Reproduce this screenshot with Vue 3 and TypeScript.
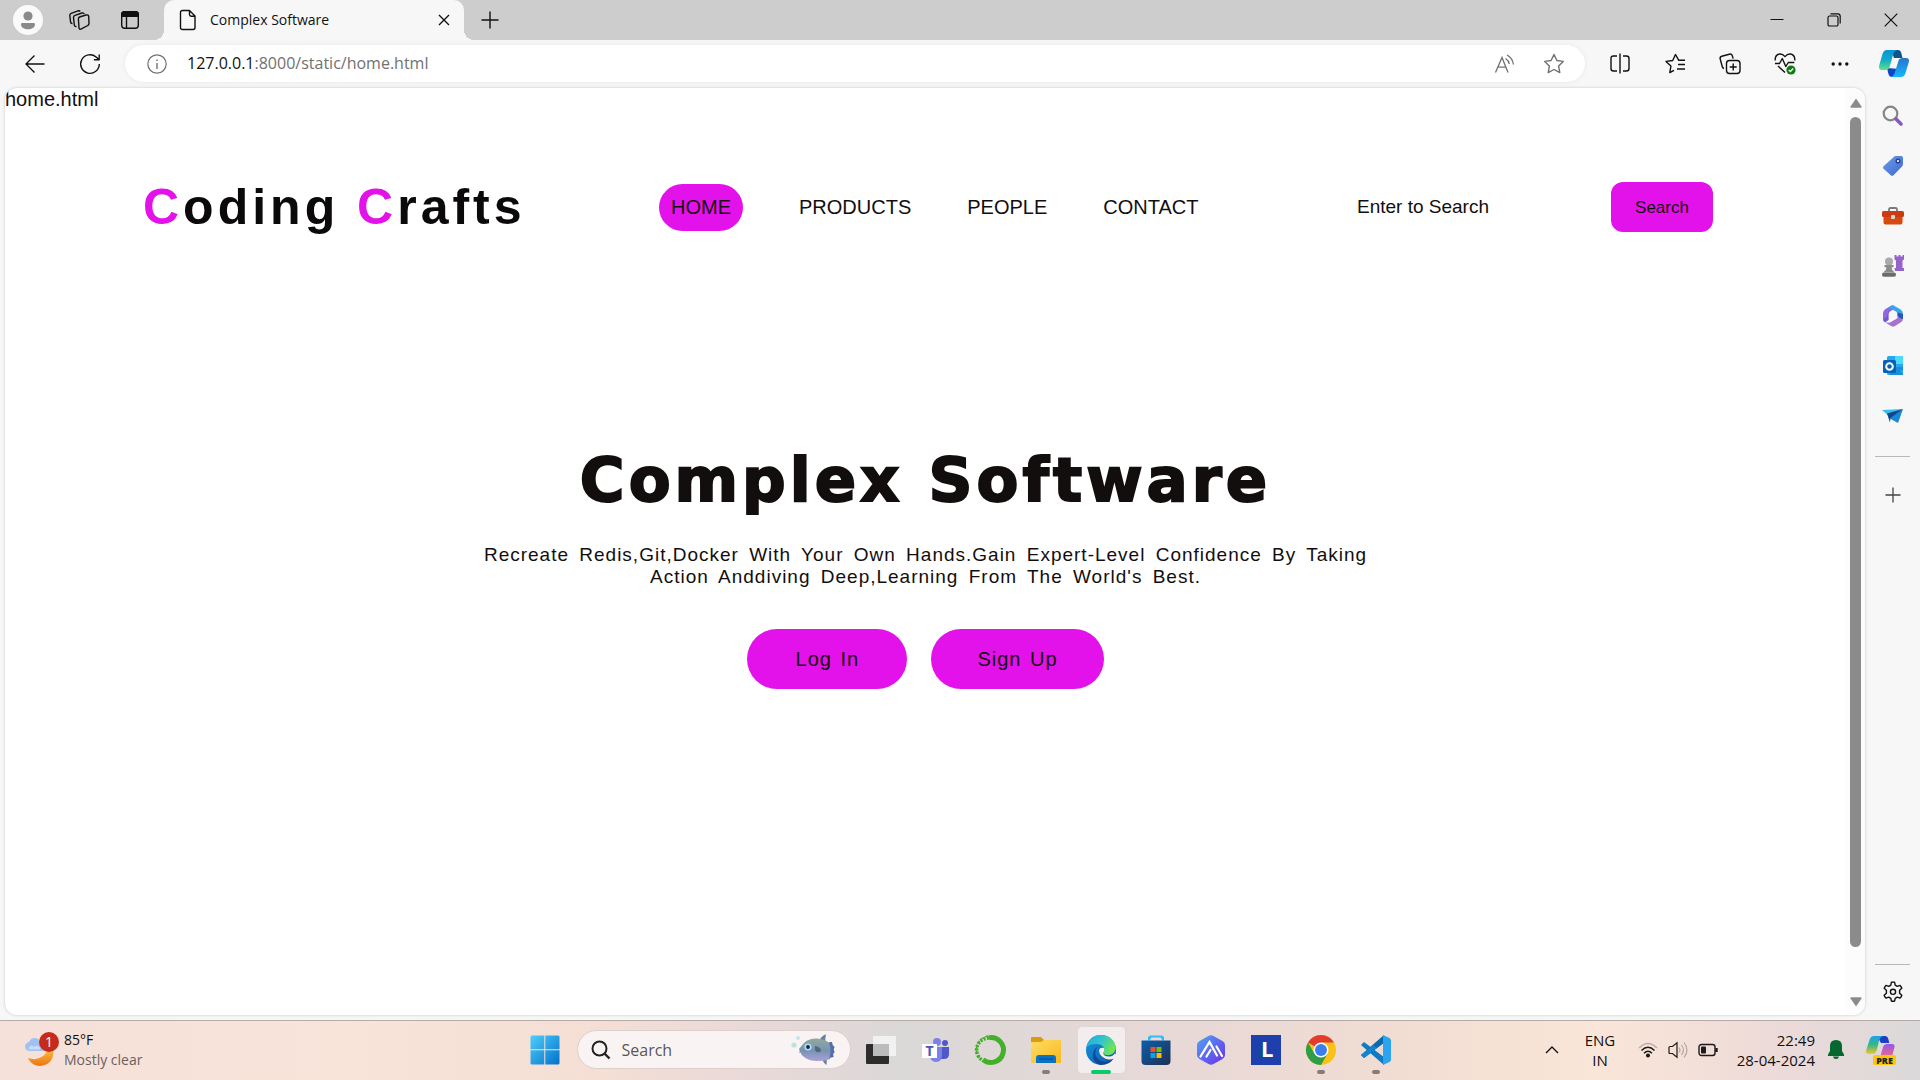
<script setup lang="ts">
import { ref } from 'vue'

const navLinks: string[] = ['HOME', 'PRODUCTS', 'PEOPLE', 'CONTACT']
const active = ref<string>('HOME')
const query = ref<string>('')
</script>

<template>
  <div class="desktop">
    <header class="titlebar">
      <button class="tool profile" aria-label="Profile">
        <svg width="30" height="30" viewBox="0 0 30 30"><circle cx="15" cy="15" r="15" fill="#fafafa" /><circle cx="15" cy="11" r="4.6" fill="#8a8a8a" /><path d="M8 19.4q0-1.4 1.4-1.4h11.200q1.400 0 1.400 1.400c0 3-3.300 4.800-7 4.800s-7-1.800-7-4.800z" fill="#8a8a8a" /></svg>
      </button>
      <button class="tool spaces" aria-label="Workspaces">
        <svg width="22" height="22" viewBox="0 0 22 22" class="line"><path d="M11.500 8l6.500-2q2.500-.7 2.700 1.600l.3 6.700q0 1.600-1.200 2.200l-6.400 3.400q-2.200 1-2.400-1.200l-.6-8.400q0-1.800 1.100-2.300zM8.500 17.500q-2 .3-2.200-1.500l-.8-7.500q-.1-1.700 1.500-2.200l7-2.300q1.800-.4 2.300 1M4.500 14.500q-1.700.2-1.900-1.300L1.800 6.500Q1.700 4.900 3.200 4.300l6.800-2.500q1.500-.4 2.200.7" /></svg>
      </button>
      <button class="tool tabs-btn" aria-label="Tab actions">
        <svg width="20" height="20" viewBox="0 0 20 20" class="line"><rect x="1.700" y="1.700" width="16.600" height="16.600" rx="3" /><path d="M1.700 4.500q0-2.800 2.800-2.800h11q2.800 0 2.800 2.800v1.700H1.700z" fill="#111" /><path d="M6.500 6v12" /></svg>
      </button>
      <div class="tab">
        <svg width="18" height="22" viewBox="0 0 18 22" class="line"><path d="M3.500 1.500h7l5.500 5.500v11.500q0 2-2 2h-10.500q-2 0-2-2v-15q0-2 2-2zM10.500 1.500v4q0 1.700 1.700 1.700H16" /></svg>
        <span class="tab-title">Complex Software</span>
        <button class="tab-close" aria-label="Close tab">
          <svg width="12" height="12" viewBox="0 0 12 12" class="line"><path d="M1 1l10 10M11 1L1 11" /></svg>
        </button>
      </div>
      <button class="tool new-tab" aria-label="New tab">
        <svg width="18" height="18" viewBox="0 0 18 18" class="line"><path d="M9 .5v17M.5 9h17" /></svg>
      </button>
      <div class="window-btns">
        <button aria-label="Minimize"><svg width="14" height="14" viewBox="0 0 14 14"><path d="M.5 6.500h13" stroke="#111" /></svg></button>
        <button aria-label="Restore"><svg width="14" height="14" viewBox="0 0 14 14" fill="none" stroke="#111" stroke-width="1.200"><rect x="1" y="3" width="10" height="10" rx="1.600" /><path d="M3.500.8h7.200q2.500 0 2.500 2.500v7.200" /></svg></button>
        <button aria-label="Close"><svg width="14" height="14" viewBox="0 0 14 14"><path d="M.7.7l12.600 12.600M13.300.7L.7 13.300" stroke="#111" stroke-width="1.200" /></svg></button>
      </div>
    </header>

    <div class="toolbar">
      <button class="cell" aria-label="Back"><svg width="20" height="20" viewBox="0 0 20 20" class="line"><path d="M19.500 10H1M9.500 1.500L1 10l8.500 8.500" /></svg></button>
      <button class="cell" aria-label="Refresh"><svg width="22" height="22" viewBox="0 0 22 22" class="line"><path d="M20.300 11a9.300 9.300 0 1 1-3.200-7l3 2.600M20.200 1.500v5.200h-5.300" /></svg></button>
      <div class="address">
        <svg width="20" height="20" viewBox="0 0 20 20" fill="none" stroke="#717171" stroke-width="1.200"><circle cx="10" cy="10" r="9.200" /><path d="M10 9v6M10 5.400v1.700" stroke-width="1.400" /></svg>
        <span class="url"><b>127.0.0.1</b>:8000/static/home.html</span>
        <button class="in-bar" aria-label="Read aloud"><svg width="21" height="20" viewBox="0 0 21 20" fill="none" stroke="#717171" stroke-width="1.300"><path d="M1.500 18.500L8 3.500l6 15M3.700 13.200h8.200M11.500 4.500q3.200 2 3.800 5.500M13 1q5.600 3 6.400 9.500" /></svg></button>
        <button class="in-bar" aria-label="Favourite"><svg width="22" height="22" viewBox="0 0 22 22" fill="none" stroke="#717171" stroke-width="1.400" stroke-linejoin="round"><path d="M11 1.500l2.900 6 6.400.9-4.700 4.600 1.200 6.600-5.800-3.100-5.800 3.100 1.200-6.600L1.700 8.400l6.400-.9z" /></svg></button>
      </div>
      <button class="cell" aria-label="Split screen"><svg width="22" height="22" viewBox="0 0 22 22" class="line"><path d="M8 3H4.500Q2 3 2 5.500v10Q2 18 4.500 18H8M14 3h3.500Q20 3 20 5.500v10q0 2.500-2.500 2.500H14M11 .5v20" /></svg></button>
      <button class="cell" aria-label="Favourites"><svg width="22" height="22" viewBox="0 0 22 22" class="line"><path d="M21 7.300h-6.200L11.500 1.500l-2.800 6-6.700.9 4.900 4.700-1.100 6.400 4.200-2.100M14 11.500h7M13 16h8" /></svg></button>
      <button class="cell" aria-label="Collections"><svg width="22" height="22" viewBox="0 0 22 22" class="line"><rect x="7.500" y="7.500" width="13.500" height="13" rx="3" /><path d="M14.200 10.500v7M10.700 14h7M5 15.500q-1.300-.3-1.700-1.800L1.200 6Q.6 3.800 2.800 3.200l7.500-2Q12.500.6 13.200 2.600l1 3" /></svg></button>
      <button class="cell" aria-label="Browser essentials"><svg width="22" height="23" viewBox="0 0 22 23" class="line"><path d="M1.200 8.500Q.8 3 5.500 2q3-.4 5.500 2.600Q13.500 1.600 16.500 2q4.700 1 4.300 6.500M1 11.500h4.500l2.800-5 3.500 8 2.500-4h6M4 14l7 6.500" /><circle cx="17" cy="18" r="4.600" fill="#107c10" stroke="none" /><path d="M14.800 18l1.600 1.600 2.800-3" stroke="#fff" /></svg></button>
      <button class="cell" aria-label="More"><svg width="18" height="6" viewBox="0 0 18 6" fill="#111"><circle cx="2.200" cy="3" r="1.700" /><circle cx="9" cy="3" r="1.700" /><circle cx="15.800" cy="3" r="1.700" /></svg></button>
      <button class="cell copilot-btn" aria-label="Copilot">
        <svg width="30" height="27" viewBox="0 0 30 27">
          <defs><linearGradient id="cpA" x1="0" y1="0" x2="0" y2="1"><stop offset="0" stop-color="#0893dc" /><stop offset=".5" stop-color="#12acc4" /><stop offset="1" stop-color="#63e08a" /></linearGradient><linearGradient id="cpB" x1="0" y1="0" x2="0" y2="1"><stop offset="0" stop-color="#2773cf" /><stop offset="1" stop-color="#16b8fb" /></linearGradient></defs>
          <path d="M12 0h7q2.500 0 3.300 3l1.200 5H15z" fill="#13558a" /><path d="M8 18l1.300 5.500Q10.300 27 13 27h5l3-8z" fill="#1443c8" />
          <path d="M8 0h10q-3 1-4 5l-3.400 12q-1 3-4 3H3q-4 0-2.700-5L3.500 4Q4.700 0 8 0z" fill="url(#cpA)" />
          <path d="M22 27H12q3-1 4-5l3.400-11q1-3 4-3H27q4 0 2.700 4.500L26.500 23Q25.300 27 22 27z" fill="url(#cpB)" />
        </svg>
      </button>
    </div>

    <div class="browser">
      <div class="viewport">
        <main class="page">
          <p class="filename">home.html</p>
          <div class="site-head">
            <div class="logo"><span>C</span>oding <span>C</span>rafts</div>
            <nav>
              <a v-for="link in navLinks" :key="link" href="#" :class="{ active: link === active }" @click.prevent="active = link">{{ link }}</a>
            </nav>
            <form class="site-search" @submit.prevent>
              <input v-model="query" type="text" aria-label="Enter to Search" placeholder="Enter to Search" />
              <button>Search</button>
            </form>
          </div>
          <section class="hero">
            <h1>Complex Software</h1>
            <p>Recreate Redis,Git,Docker With Your Own Hands.Gain Expert-Level Confidence By Taking Action Anddiving Deep,Learning From The World's Best.</p>
            <div class="cta"><a href="#">Log In</a><a href="#">Sign Up</a></div>
          </section>
        </main>
        <div class="scrollbar">
          <svg width="12" height="10" viewBox="0 0 12 10"><path d="M6 .5l5.500 8q.3 1.200-.8 1.200H1.300q-1.100 0-.8-1.200z" fill="#8b8b8b" /></svg>
          <div class="track"><div class="thumb"></div></div>
          <svg width="12" height="10" viewBox="0 0 12 10"><path d="M6 9.500l5.500-8Q11.800.3 10.700.3H1.300Q.2.300.5 1.500z" fill="#8b8b8b" /></svg>
        </div>
      </div>
      <aside class="sidebar">
        <button aria-label="Search"><svg width="22" height="22" viewBox="0 0 22 22"><circle cx="8.500" cy="8.500" r="6.800" fill="none" stroke="#858585" stroke-width="2.200" /><path d="M14 14l5 5" stroke="#8b57c4" stroke-width="3.600" stroke-linecap="round" /></svg></button>
        <button aria-label="Shopping"><svg width="22" height="22" viewBox="0 0 22 22"><defs><linearGradient id="tag" x1="0" y1="0" x2="1" y2="1"><stop offset="0" stop-color="#6a9be8" /><stop offset="1" stop-color="#4169d0" /></linearGradient></defs><path d="M11.500 2.200Q12.300 1 14 1h5q2 0 2 2v6q0 1.500-1 2.400l-8.500 8.800q-1.300 1.200-2.700 0L1.500 13.700q-1-1.200 0-2.500z" fill="url(#tag)" /><circle cx="16" cy="6" r="1.800" fill="#fff" stroke="#2d3f94" stroke-width="1.500" /></svg></button>
        <button aria-label="Tools"><svg width="22" height="20" viewBox="0 0 22 20"><path d="M7 6V3.500Q7 2 8.500 2h5Q15 2 15 3.500V6" fill="none" stroke="#7b7b7b" stroke-width="1.800" /><path d="M1.500 9h19v7.500q0 2-2 2h-15q-2 0-2-2z" fill="#d9480f" /><rect x="0" y="5" width="22" height="6" rx="1.500" fill="#cc3b10" /><rect x="9" y="9" width="4" height="4" rx="1" fill="#d4d4d4" /></svg></button>
        <button aria-label="Games"><svg width="22" height="22" viewBox="0 0 22 22"><path d="M12.500 0h2v1.500h2V0h2v1.500h2V0h1.500v4.500l-1.500 1v7.500h1.500v3h-9l-.5-3h1.500V5.500l-1.500-1z" fill="#9563cb" /><circle cx="7" cy="6.500" r="4" fill="#aaa" /><path d="M2.500 10h9v2.200H9.500q0 3 3 5H1.500q3-2 3-5h-2z" fill="#8b8b8b" /><rect x="0" y="17.500" width="14" height="4.300" rx="2" fill="#6c6c6c" /></svg></button>
        <button aria-label="Microsoft 365"><svg width="22" height="22" viewBox="0 0 22 22"><path d="M9 .8L3.500 4Q1 5.500 1 8.500v5.200q0 2.500 2 3.600L6.500 15V9.500Q6.500 7.500 8 6.500l5-3-.5-2.500Q11-.2 9 .8z" fill="#8f69df" /><path d="M12.500 1l5.800 3.300Q21 6 21 8.800V14l-5.500-2V9q0-1.500-1.500-2.500L8 3.500q-.5-2 1-2.700 2-.9 3.500.2z" fill="#37a6ec" /><path d="M21 9v4.500q0 2.700-2.500 4L13 21q-2 1-4 0l-6-3.700q4 1 6-.3l5.500-3.500Q17 12 17 9z" fill="#a870d1" /><path d="M8 3.500l-1.500 6V15L3 17.300Q1 16 1 13.700q4-.7 4.500-4.200z" fill="#5a4fd0" opacity=".55" /><path d="M15.500 7.500L21 9v5q-3 0-5.500-3z" fill="#2558bb" /><circle cx="11" cy="11" r="4" fill="#f7f7f7" /></svg></button>
        <button aria-label="Outlook"><svg width="22" height="22" viewBox="0 0 22 22"><rect x="5" y="1" width="16" height="19" rx="1.500" fill="#28a8ea" /><path d="M13 1h8v8h-8z" fill="#50d9ff" /><path d="M14 12h7v2l-3 2 3 3v1H8v-3z" fill="#1490df" /><rect x="1" y="5" width="13" height="13" rx="1.500" fill="#0364b8" /><circle cx="7.500" cy="11.500" r="3.300" fill="none" stroke="#fff" stroke-width="2" /></svg></button>
        <button aria-label="Drop"><svg width="22" height="18" viewBox="0 0 22 18"><path d="M0 3L21 2l-13 8z" fill="#37bdf0" /><path d="M21 2l-5 14-9-5z" fill="#1688d4" /><path d="M5 6.500L21 2 8.500 11 8 15.500z" fill="#10478a" /></svg></button>
        <hr />
        <button class="add" aria-label="Add"><svg width="16" height="16" viewBox="0 0 16 16"><path d="M8 .5v15M.5 8h15" stroke="#444" stroke-width="1.300" /></svg></button>
        <span class="spacer"></span>
        <hr />
        <button class="gear" aria-label="Settings"><svg width="22" height="22" viewBox="0 0 22 22" class="line"><path d="M8.800 4.200l.6-2.900q1.600-.4 3.200 0l.6 2.900 2 1.200 2.900-1q1.200 1.200 1.700 2.900l-2.200 2v2.900l2.200 2q-.5 1.700-1.700 2.900l-2.900-1-2 1.200-.6 2.700q-1.600.4-3.200 0l-.6-2.700-2-1.200-2.900 1q-1.200-1.200-1.700-2.900l2.200-2V9.300l-2.200-2q.5-1.700 1.700-2.900l2.900 1z" /><circle cx="11" cy="10.800" r="2.600" /></svg></button>
      </aside>
    </div>

    <footer class="taskbar">
      <div class="side weather">
        <svg width="36" height="36" viewBox="0 0 36 36"><defs><linearGradient id="moon" x1="0" y1="0" x2="0" y2="1"><stop offset="0" stop-color="#fbc040" /><stop offset="1" stop-color="#ee7413" /></linearGradient></defs><path d="M28 17q2 9-5 14.500-6 4-13 1.500-5-2-7-7 9 3 15-2 4-3 4-7z" fill="url(#moon)" /><path d="M4 19q-4-1-4-4.500T4 10q2-4.500 6-4t6 4q5 0 5 4.500T17 19z" fill="#9fc2f2" /><path d="M4 15q3-3 5 0 4-3 6 1v1.500H4z" fill="#c6ddfa" /><circle cx="24" cy="10" r="10" fill="#c42b1c" /><text x="24" y="15" text-anchor="middle" font-size="14" fill="#fff">1</text></svg>
        <div><div>85°F</div><div class="muted">Mostly clear</div></div>
      </div>

      <div class="apps">
        <button class="app" aria-label="Start"><svg width="30" height="30" viewBox="0 0 30 30"><defs><linearGradient id="win" gradientUnits="userSpaceOnUse" x1="0" y1="0" x2="30" y2="30"><stop offset="0" stop-color="#4fd1fc" /><stop offset="1" stop-color="#006fcc" /></linearGradient></defs><path d="M2 .5h12.300v13.800H.5V2Q.5.5 2 .5zM15.300.5h12.700q1.500 0 1.500 1.500v12.300H15.300zM.5 15.300h13.800v14.200H2q-1.500 0-1.500-1.500zM15.300 15.300h14.200V28q0 1.500-1.500 1.500H15.300z" fill="url(#win)" /></svg></button>
        <label class="task-search">
          <svg width="20" height="20" viewBox="0 0 20 20" fill="none" stroke="#222" stroke-width="2"><circle cx="8.500" cy="8.500" r="7" /><path d="M13.500 13.500l5 5" stroke-width="2.400" /></svg>
          <input type="text" placeholder="Search" aria-label="Search" />
          <svg width="44" height="32" viewBox="0 0 44 32"><defs><linearGradient id="fish" x1="0" y1="0" x2="0" y2="1"><stop offset="0" stop-color="#91a99d" /><stop offset=".55" stop-color="#7893b3" /><stop offset="1" stop-color="#aaa2d6" /></linearGradient></defs><path d="M28 7q3-6 7-6.500-1.500 4 0 9zM31 24q1 5 4.500 7 .8-4-.5-9z" fill="#66809d" /><path d="M8 15q3-4 6-7 5-4 12-3.500 7 .5 12 4l3-.5.5 3 2 2-1 2.500 1 2.500-1.500 2 .5 3-3 .5-1.500 2Q33 27 26 27q-8 0-13-4-3-2.500-3.500-4.500L8 19l.8-2z" fill="url(#fish)" /><path d="M38 8.500l3-.5.5 3 2 2-1 2.500 1 2.500-1.500 2 .5 3-3 .5-1.500 2q3-9 0-17z" fill="#506fae" /><path d="M24 12q6 1 6 5-4 3-6-1z" fill="#4b6b76" /><circle cx="17" cy="13" r="3.600" fill="#a7e0f0" /><circle cx="17" cy="13" r="1.900" fill="#17204e" /><circle cx="3" cy="11" r="2.600" fill="#b9e4e4" /><circle cx="7" cy="4" r="2" fill="#c4e6ea" /></svg>
        </label>
        <button class="app" aria-label="Task view"><svg width="30" height="30" viewBox="0 0 30 30"><rect x="0" y="9" width="23" height="20" rx="1" fill="#2d2d2d" /><rect x="7" y="1" width="23" height="20" rx="1" fill="#f4f4f4" opacity=".9" /><path d="M7 9h16v12H7z" fill="#bcbcbc" /></svg></button>
        <button class="app" aria-label="Teams"><svg width="28" height="26" viewBox="0 0 28 26"><circle cx="15" cy="5" r="4" fill="#7b83eb" /><circle cx="23" cy="6" r="3" fill="#5059c9" /><path d="M18 10h9v7q0 5-5 5h-4z" fill="#5059c9" /><path d="M8 10h12v8q0 7-6 7t-6-7z" fill="#7b83eb" /><rect x="0" y="7" width="15" height="14" fill="#fff" /><text x="7.500" y="19" text-anchor="middle" font-size="14" font-weight="700" fill="#4b53bc">T</text></svg></button>
        <button class="app" aria-label="Anaconda"><svg width="30" height="30" viewBox="0 0 30 30" fill="none" stroke="#43b02a"><path d="M13 2.600A12.500 12.500 0 1 1 7 24.600" stroke-width="5" /><path d="M13 3A12 12 0 0 0 6 25" stroke-width="3.600" stroke-dasharray="2.200 1.300" /><path d="M12 1A14 14 0 0 0 4 24" stroke-width="1.400" stroke-dasharray="3 2" /></svg></button>
        <button class="app open" aria-label="Files"><svg width="30" height="28" viewBox="0 0 30 28"><defs><linearGradient id="fold" x1="0" y1="0" x2="1" y2="1"><stop offset="0" stop-color="#ffdc66" /><stop offset="1" stop-color="#f9b91c" /></linearGradient></defs><path d="M0 2q0-1 1-1h9l3 3h16q1 0 1 1v4H0z" fill="#dc9a0c" /><path d="M0 6h10l3-2h17v22q0 1-1 1H1q-1 0-1-1z" fill="url(#fold)" /><path d="M5 22q0-3 3-3h14q3 0 3 3v5H5z" fill="#0b73c4" /><path d="M8 23h14" stroke="#074b8d" /></svg></button>
        <button class="app current" aria-label="Edge"><svg width="30" height="30" viewBox="0 0 30 30"><defs><linearGradient id="edA" x1="0" y1="0" x2="1" y2=".5"><stop offset="0" stop-color="#2aa5dc" /><stop offset=".5" stop-color="#31c3cf" /><stop offset="1" stop-color="#6ee650" /></linearGradient><linearGradient id="edB" x1="0" y1="0" x2="1" y2="1"><stop offset="0" stop-color="#1494df" /><stop offset="1" stop-color="#0b5ba8" /></linearGradient></defs><circle cx="15" cy="15" r="15" fill="url(#edB)" /><path d="M.5 12Q3 0 15 0q9 0 13 7 3 6 1 9-2 4-7 4-4 0-5-2 2-2 1-5-2-4-8-4-6 0-9.500 3z" fill="url(#edA)" /><path d="M11 12q-4 7 1 12 5 5 13 1l3-2q-4 7-13 7Q6 28 7 19q1-5 4-7z" fill="#123f8c" opacity=".8" /><path d="M13 15q1-3 5-2 1 3-1 5 1 4 7 3.500 3-.5 5-3l2 4-3 1q-4 2-9 0-6-3-6-8.500z" fill="#f3eeed" /></svg></button>
        <button class="app" aria-label="Store"><svg width="30" height="30" viewBox="0 0 30 30"><defs><linearGradient id="store" x1="0" y1="0" x2="1" y2="1"><stop offset="0" stop-color="#0b5fae" /><stop offset="1" stop-color="#203052" /></linearGradient></defs><path d="M8 8V3q0-1.500 1.500-1.500h11Q22 1.500 22 3v5" fill="none" stroke="#35bdf0" stroke-width="2" /><path d="M.5 5.500h29V26q0 4-4 4h-21q-4 0-4-4z" fill="url(#store)" /><path d="M8 5.500V3h2M22 5.500V3h-2" fill="none" stroke="#35bdf0" stroke-width="2" /><path d="M9.500 12h5v5h-5z" fill="#f25022" /><path d="M15.500 12h5v5h-5z" fill="#7fba00" /><path d="M9.500 18h5v5h-5z" fill="#00a4ef" /><path d="M15.500 18h5v5h-5z" fill="#ffb900" /></svg></button>
        <button class="app" aria-label="Studio"><svg width="28" height="30" viewBox="0 0 28 30"><defs><linearGradient id="hex" x1="0" y1="0" x2="1" y2="1"><stop offset="0" stop-color="#50a4f4" /><stop offset="1" stop-color="#6b2fe8" /></linearGradient></defs><path d="M11.500 1q2.500-1.500 5 0l9 5Q28 7.300 28 10v10q0 2.700-2.500 4l-9 5q-2.500 1.500-5 0l-9-5Q0 22.700 0 20V10q0-2.700 2.500-4z" fill="url(#hex)" /><path d="M3.500 21.500L12.500 7 20 20.500M9.500 21.500l4-6.500M19.500 11.500l5.500 9.500" fill="none" stroke="#fff" stroke-width="2.200" stroke-linecap="round" /></svg></button>
        <button class="app" aria-label="L"><svg width="30" height="30" viewBox="0 0 30 30"><path d="M0 0h30v30H0z" fill="#1e3fae" /><path d="M8 23l4-17v17z" fill="#0f4f70" /><text x="10" y="22" font-size="22" font-weight="700" fill="#fff">L</text></svg></button>
        <button class="app open" aria-label="Chrome"><svg width="30" height="30" viewBox="0 0 30 30"><circle cx="15" cy="15" r="15" fill="#fbc116" /><path d="M15 15L2 7.500A15 15 0 0 1 28 7.500H15z" fill="#e33b2e" /><path d="M2 7.500A15 15 0 0 0 15 30l6.500-11.200L15 15 8.500 18.800z" fill="#2c9e48" /><circle cx="15" cy="15" r="7.500" fill="#fff" /><circle cx="15" cy="15" r="6" fill="#3c7df0" /></svg></button>
        <button class="app open" aria-label="Code"><svg width="30" height="30" viewBox="0 0 30 30"><path d="M0 10l3-3 20 15v8z" fill="#0f7bc4" /><path d="M0 20l3 3L23 8V0z" fill="#0a68ac" /><path d="M0 20l3 3L16 13l-4-3z" fill="#1283cc" /><path d="M22 0l6.500 3Q30 4 30 5.500v19q0 1.500-1.500 2.500L22 30z" fill="#2aa4ee" /><path d="M22 9l-8 6 8 6z" fill="#e8dad6" /></svg></button>
      </div>

      <div class="side tray">
        <svg width="14" height="8" viewBox="0 0 14 8" class="line"><path d="M1 7l6-6 6 6" /></svg>
        <div class="lang"><div>ENG</div><div>IN</div></div>
        <div class="status">
          <svg width="20" height="16" viewBox="0 0 20 16" fill="none" stroke="#1b1b1b" stroke-width="1.500"><path d="M1 6Q10-3 19 6" stroke="#b9aeab" /><path d="M3.500 8.500Q10 2 16.500 8.500M6 11.300q4-4.200 8 0" /><circle cx="10" cy="13.500" r="1.300" fill="#1b1b1b" /></svg>
          <svg width="20" height="18" viewBox="0 0 20 18" fill="none" stroke="#1b1b1b" stroke-width="1.200"><path d="M1 6.500q0-1 1-1h2.500L9 1.800v14.400l-4.500-3.700H2q-1 0-1-1z" /><path d="M11 6.500q2 2.500 0 5M13.500 4q4 5 0 10M16 1.500q6 7.500 0 15" stroke="#b3a8a5" /></svg>
          <svg width="20" height="14" viewBox="0 0 20 14" fill="none" stroke="#1b1b1b" stroke-width="1.400"><rect x="1" y="1.500" width="16" height="11" rx="2.500" /><path d="M18.500 5v4" stroke-width="2.400" /><rect x="3" y="3.500" width="5" height="7" rx="1" fill="#1b1b1b" stroke="none" /></svg>
        </div>
        <div class="clock"><div>22:49</div><div>28-04-2024</div></div>
        <svg width="16" height="19" viewBox="0 0 16 19"><path d="M8 0q6 0 6 6v5l2 3.500V16H0v-1.500L2 11V6q0-6 6-6zM5 16.500h6Q10.500 19 8 19t-3-2.500z" fill="#04682f" /></svg>
        <svg class="copilot" width="30" height="30" viewBox="0 0 30 30"><defs><linearGradient id="cpC" x1="0" y1="0" x2="0" y2="1"><stop offset="0" stop-color="#1ba2e8" /><stop offset=".5" stop-color="#35b983" /><stop offset="1" stop-color="#f6c528" /></linearGradient><linearGradient id="cpD" x1="0" y1="0" x2="0" y2="1"><stop offset="0" stop-color="#9a55ea" /><stop offset="1" stop-color="#f76f74" /></linearGradient></defs><path d="M11 1h8q2.500 0 3.300 3l1 4H15z" fill="#1c3fc4" /><path d="M8 1h9q-3 1-4 5l-2.500 10q-1 3-4 3H3q-4 0-2.700-4L3.500 5Q4.700 1 8 1z" fill="url(#cpC)" /><path d="M22 24H11q3-1 4-5l2-7q1-3 4-3h5q3 0 2.500 3L26 22z" fill="url(#cpD)" /><rect x="7" y="20" width="23" height="10" rx="2" fill="#fcc60a" /><text x="18.500" y="28.500" text-anchor="middle" font-size="9" font-weight="800" fill="#222">PRE</text></svg>
      </div>
    </footer>
  </div>
</template>

<style>
body {
  margin: 0;
  background: #f7f7f7;
}
</style>

<style scoped>
.desktop {
  min-height: 100vh;
  display: flex;
  flex-direction: column;
  background: #f7f7f7;
  color: #111;
  font-family: "Open Sans", "Noto Sans", sans-serif;
}
.desktop * {
  box-sizing: border-box;
}
button {
  display: flex;
  align-items: center;
  justify-content: center;
  padding: 0;
  border: 0;
  background: none;
  color: inherit;
  font: inherit;
}
svg {
  flex: none;
  display: block;
  overflow: visible;
}
.line {
  fill: none;
  stroke: #111;
  stroke-width: 1.4;
  stroke-linejoin: round;
}

/* title bar */
.titlebar {
  height: 40px;
  display: flex;
  align-items: center;
  background: #cdcdcd;
}
.tool {
  width: 51px;
  height: 40px;
}
.profile {
  margin-left: 2px;
}
.tab {
  position: relative;
  width: 300px;
  height: 40px;
  margin-left: 9px;
  padding: 0 12px 0 15px;
  display: flex;
  align-items: center;
  border-radius: 10px 10px 0 0;
  background: #f7f7f7;
  font-size: 14px;
}
.tab::before,
.tab::after {
  content: "";
  position: absolute;
  bottom: 0;
  width: 10px;
  height: 10px;
}
.tab::before {
  right: 100%;
  background: radial-gradient(circle at 0 0, #cdcdcd 10px, #f7f7f7 10px);
}
.tab::after {
  left: 100%;
  background: radial-gradient(circle at 100% 0, #cdcdcd 10px, #f7f7f7 10px);
}
.tab-title {
  flex: 1;
  margin-left: 13px;
  padding-bottom: 2px;
}
.tab-close {
  width: 16px;
  height: 16px;
}
.window-btns {
  margin: 0 1px 0 auto;
  display: flex;
}
.window-btns button {
  width: 57px;
  height: 40px;
}

/* toolbar */
.toolbar {
  height: 48px;
  padding: 0 0 1px 7px;
  display: flex;
  align-items: center;
}
.cell {
  width: 55px;
  height: 40px;
}
.copilot-btn {
  width: 53px;
}
.address {
  flex: 1;
  height: 37px;
  margin: 0 7px 0 8px;
  padding: 0 6px 0 22px;
  display: flex;
  align-items: center;
  border-radius: 19px;
  background: #fff;
  box-shadow: 0 0 4px #e6e6e6;
}
.url {
  flex: 1;
  margin-left: 20px;
  padding-bottom: 1px;
  color: #717171;
  font-size: 16px;
}
.url b {
  color: #111;
  font-weight: 400;
}
.in-bar {
  width: 50px;
  height: 36px;
}

/* page frame */
.browser {
  flex: 1;
  display: flex;
  padding: 0 0 5px 5px;
}
.viewport {
  flex: 1;
  display: flex;
  overflow: hidden;
  border-radius: 12px;
  background: #fff;
  box-shadow: 0 0 3px #c4c4c4;
}
.page {
  flex: 1;
  font-family: "Liberation Sans", Arial, sans-serif;
  font-size: 20px;
  line-height: 23px;
  color: #130e0e;
}
.page a {
  color: inherit;
  text-decoration: none;
}
.filename {
  margin: 0;
}
.site-head {
  margin-top: 67px;
  padding: 0 133px 0 138px;
  display: flex;
  align-items: center;
  justify-content: space-between;
}
.logo {
  font-size: 50px;
  font-weight: 700;
  line-height: 58px;
  letter-spacing: 4px;
  color: #0b0909;
}
.logo span {
  color: #e412ea;
}
nav {
  display: flex;
  align-items: center;
  gap: 56px;
}
nav .active {
  padding: 12px;
  border-radius: 25px;
  background: #e412ea;
}
.site-search {
  display: flex;
  align-items: center;
}
.site-search input {
  width: 279px;
  height: 50px;
  padding: 0 25px;
  border: 0;
  background: none;
  font-family: inherit;
  font-size: 19px;
}
.site-search input::placeholder {
  color: #130e0e;
  opacity: 1;
}
.site-search button {
  width: 102px;
  height: 50px;
  border-radius: 12px;
  background: #e412ea;
  font-size: 17px;
}
.hero {
  margin-top: 200px;
  display: flex;
  flex-direction: column;
  align-items: center;
  text-align: center;
}
h1 {
  margin: 0;
  font-family: "DejaVu Sans", Verdana, sans-serif;
  font-size: 61px;
  font-weight: 700;
  line-height: 88px;
  letter-spacing: 4px;
  -webkit-text-stroke: 2px #130e0e;
}
.hero p {
  max-width: 920px;
  margin: 20px 0 0;
  font-size: 19px;
  line-height: 22px;
  letter-spacing: 1px;
  word-spacing: 4px;
}
.cta {
  margin-top: 41px;
  display: flex;
  gap: 24px;
}
.cta a {
  min-width: 160px;
  padding: 18px 46px;
  border-radius: 30px;
  background: #e412ea;
  line-height: 24px;
  letter-spacing: 1px;
  word-spacing: 2px;
}
.scrollbar {
  width: 19px;
  padding: 10px 0 8px;
  display: flex;
  flex-direction: column;
  align-items: center;
  background: #fcfcfc;
}
.track {
  flex: 1;
  padding: 9px 0 50px;
  display: flex;
}
.thumb {
  width: 11px;
  border-radius: 6px;
  background: #8b8b8b;
}

/* side panel */
.sidebar {
  width: 55px;
  padding-top: 3px;
  display: flex;
  flex-direction: column;
  align-items: center;
}
.sidebar button {
  width: 50px;
  height: 50px;
}
.sidebar hr {
  width: 35px;
  height: 1px;
  margin: 15px 0 0;
  border: 0;
  background: #b9b9b9;
}
.sidebar .add {
  margin-top: 13px;
}
.spacer {
  flex: 1;
}
.sidebar .gear {
  height: 46px;
  margin-top: 4px;
}

/* taskbar */
.taskbar {
  height: 60px;
  padding-bottom: 2px;
  display: flex;
  align-items: center;
  border-top: 1px solid #b5aaa8;
  background: linear-gradient(90deg, #f6e1da 0, #f8e4d9 18%, #f5dfd5 31%, #e9d9d8 39%, #dbd8d8 47%, #e1d8d7 54%, #e9d9d6 63%, #f1ddd2 73%, #fae6d8 83%, #ecdad9 93%, #dbd9da 100%);
  font-size: 14px;
  line-height: 20px;
}
.side {
  flex: 1;
  display: flex;
  align-items: center;
}
.weather {
  padding-left: 25px;
  gap: 3px;
}
.muted {
  color: #6a615f;
}
.apps {
  display: flex;
  align-items: center;
}
.app {
  position: relative;
  width: 55px;
  height: 48px;
}
.app.current::before {
  content: "";
  position: absolute;
  inset: 0 3px;
  border: 1px solid #e2d8d6;
  border-radius: 5px;
  background: #f3eeed;
}
.app svg {
  position: relative;
}
.app.open::after,
.app.current::after {
  content: "";
  position: absolute;
  bottom: 0;
  width: 8px;
  height: 4px;
  border-radius: 2px;
  background: #857c7a;
}
.app.current::after {
  width: 20px;
  background: #08cc6a;
}
.task-search {
  width: 274px;
  height: 39px;
  margin: 0 3px 0 4px;
  padding: 0 15px 0 13px;
  display: flex;
  align-items: center;
  border: 1px solid #dccfcc;
  border-radius: 20px;
  background: #f9f4f3;
}
.task-search input {
  flex: 1;
  min-width: 0;
  margin-left: 9px;
  border: 0;
  background: none;
  font: inherit;
  font-size: 16px;
}
.task-search input::placeholder {
  color: #5b5756;
  opacity: 1;
}
.tray {
  justify-content: flex-end;
  padding-right: 24px;
  font-size: 15px;
}
.lang {
  width: 34px;
  margin: 0 21px 0 24px;
  text-align: center;
}
.status {
  display: flex;
  align-items: center;
  gap: 10px;
}
.clock {
  width: 84px;
  margin: 0 13px 0 13px;
  text-align: right;
}
.copilot {
  margin-left: 22px;
}
</style>
